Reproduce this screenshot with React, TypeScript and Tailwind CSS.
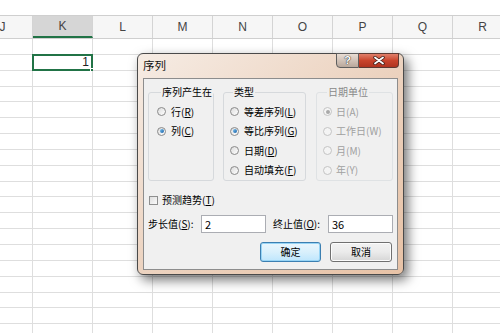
import React from 'react'

const cols = ['J', 'K', 'L', 'M', 'N', 'O', 'P', 'Q', 'R']
const rows = Array.from({ length: 19 }, (_, i) => i)

const Radio = ({ checked = false, disabled = false }: { checked?: boolean; disabled?: boolean }) => (
    <span
        className={
            'flex items-center justify-center w-[9px] h-[9px] rounded-full border ' +
            (disabled
                ? 'border-[#c4c4c4] bg-[#f4f4f4]'
                : 'border-[#8a8a8a] bg-gradient-to-br from-[#dcdcdc] to-[#ffffff]')
        }
    >
        {checked && (
            <span
                className={
                    'w-[4px] h-[4px] rounded-full ' +
                    (disabled ? 'bg-[#a8a8a8]' : 'bg-gradient-to-br from-[#7cc3ef] to-[#0e5ea6]')
                }
            />
        )}
    </span>
)

const Label = ({ text, k, plain = false }: { text: string; k: string; plain?: boolean }) => (
    <span className="whitespace-nowrap">
        {text}({plain ? k : <span className="underline underline-offset-[1px]">{k}</span>})
    </span>
)

const Option = ({
    text,
    k,
    checked,
    disabled,
    gap,
}: {
    text: string
    k: string
    checked?: boolean
    disabled?: boolean
    gap: string
}) => (
    <div className={'flex items-center h-[19.5px] ' + gap}>
        <Radio checked={checked} disabled={disabled} />
        <span className={disabled ? 'text-[#a0a0a0]' : ''}>
            <Label text={text} k={k} plain={disabled} />
        </span>
    </div>
)

const Sheet = () => (
    <div className="flex flex-col">
        <div className="h-[15px] bg-white" />
        <div className="flex ml-[-27px] h-[24px] border-y border-[#cfcfcf] bg-[#f6f6f6]">
            {cols.map((c) => (
                <div
                    key={c}
                    className={
                        'flex items-center justify-center w-[60px] shrink-0 border-r border-[#d4d4d4] text-[12px] text-[#444] ' +
                        (c === 'K' ? 'bg-[#d6d6d6] border-b-2 border-b-[#217346]' : '')
                    }
                >
                    {c}
                </div>
            ))}
        </div>
        {rows.map((r) => (
            <div key={r} className="flex ml-[-27px] h-[15.85px]">
                {cols.map((c) => (
                    <div
                        key={c}
                        className="relative w-[60px] shrink-0 border-r border-b border-[#dedede] bg-white"
                    >
                        {r === 1 && c === 'K' && (
                            <div className="absolute left-[-1px] top-[-1px] right-[-1px] bottom-[-1px] border-2 border-[#217346] flex items-center justify-end pr-[2px] text-[12px] text-[#222]">
                                1
                                <span className="absolute right-[-4px] bottom-[-4px] w-[5px] h-[5px] bg-[#217346] border border-white" />
                            </div>
                        )}
                    </div>
                ))}
            </div>
        ))}
    </div>
)

const SeriesDialog = () => (
    <div className="absolute left-[137px] top-[53px] w-[267px] h-[222px] flex flex-col rounded-[6px] border border-[#4a4a4a] bg-gradient-to-br from-[#f6ece4] via-[#ecd3c0] to-[#e7c2a6] shadow-[4px_5px_12px_rgba(0,0,0,0.55)]">
        <div className="flex h-[24px] justify-between">
            <div
                className="flex items-center pl-[5px] text-[11.5px] text-[#111]"
                style={{ fontFamily: '"Noto Sans CJK SC", sans-serif' }}
            >
                序列
            </div>
            <div className="flex h-[15px] mr-[4px] mt-[-1px]">
                <div className="flex items-center justify-center w-[23px] border border-[#5e5e5e] rounded-bl-[4px] bg-gradient-to-b from-[#e9ddd4] to-[#b9a89c] text-[11px] font-bold text-white [text-shadow:0_0_1px_#222,0_0_1px_#222]">
                    ?
                </div>
                <div className="flex items-center justify-center w-[40px] border border-l-0 border-[#5e3a33] rounded-br-[4px] bg-gradient-to-b from-[#e07f6a] via-[#c9442c] to-[#b03420]">
                    <svg width="12" height="9" viewBox="0 0 12 9">
                        <path d="M2 1.5 L10 7.5 M10 1.5 L2 7.5" stroke="#3a1d18" strokeWidth="3.4" strokeLinecap="round" />
                        <path d="M2 1.5 L10 7.5 M10 1.5 L2 7.5" stroke="#ffffff" strokeWidth="1.8" strokeLinecap="round" />
                    </svg>
                </div>
            </div>
        </div>
        <div
            className="flex-1 mx-[5px] mb-[4px] border border-[#8d8d8d] bg-[#f0f0f0] px-[4px] pt-[6px] flex flex-col text-[10px] text-[#000] leading-[14px]"
            style={{ fontFamily: '"Noto Sans CJK SC", "Liberation Sans", sans-serif' }}
        >
            <div className="flex">
                <fieldset className="w-[65px] h-[96px] border border-[#d6d9dc] rounded-[3px] pl-[8px]">
                    <legend className="ml-[4px] px-[1px] whitespace-nowrap">序列产生在</legend>
                    <div className="pt-[3px]">
                        <Option text="行" k="R" gap="gap-[5px]" />
                        <Option text="列" k="C" checked gap="gap-[5px]" />
                    </div>
                </fieldset>
                <fieldset className="ml-[9px] w-[83px] h-[96px] border border-[#d6d9dc] rounded-[3px] pl-[6px]">
                    <legend className="ml-[3px] px-[1px] whitespace-nowrap">类型</legend>
                    <div className="pt-[3px]">
                        <Option text="等差序列" k="L" gap="gap-[5px]" />
                        <Option text="等比序列" k="G" checked gap="gap-[5px]" />
                        <Option text="日期" k="D" gap="gap-[5px]" />
                        <Option text="自动填充" k="F" gap="gap-[5px]" />
                    </div>
                </fieldset>
                <fieldset className="ml-[10px] w-[77px] h-[96px] border border-[#dfe2e4] rounded-[3px] pl-[6px]">
                    <legend className="ml-[4px] px-[1px] whitespace-nowrap text-[#8a8a8a]">日期单位</legend>
                    <div className="pt-[3px]">
                        <Option text="日" k="A" checked disabled gap="gap-[4px]" />
                        <Option text="工作日" k="W" disabled gap="gap-[4px]" />
                        <Option text="月" k="M" disabled gap="gap-[4px]" />
                        <Option text="年" k="Y" disabled gap="gap-[4px]" />
                    </div>
                </fieldset>
            </div>
            <div className="flex items-center gap-[4px] mt-[12px] h-[14px]">
                <span className="ml-[1px] w-[9px] h-[9px] border border-[#8e8f8f] bg-gradient-to-br from-[#dedede] to-[#fbfbfb]" />
                <Label text="预测趋势" k="T" />
            </div>
            <div className="flex items-center mt-[8px] h-[18px]">
                <span className="w-[53px]">
                    <Label text="步长值" k="S" />:
                </span>
                <div className="flex items-center w-[65px] h-[18px] border border-[#abadb3] bg-white pl-[3px] text-[11px]">
                    2
                </div>
                <span className="ml-[7px] w-[55px]">
                    <Label text="终止值" k="O" />:
                </span>
                <div className="flex items-center w-[65px] h-[18px] border border-[#abadb3] bg-white pl-[3px] text-[11px]">
                    36
                </div>
            </div>
            <div className="flex justify-end gap-[9px] mt-[9px] mr-[1px]">
                <button className="flex items-center justify-center w-[61px] h-[20px] rounded-[3px] border border-[#3c7fb1] bg-gradient-to-b from-[#eaf6fd] via-[#d9f0fc] to-[#bee6fd] shadow-[inset_0_0_0_1px_#97d4f5]">
                    确定
                </button>
                <button className="flex items-center justify-center w-[62px] h-[20px] rounded-[3px] border border-[#707070] bg-gradient-to-b from-[#f2f2f2] via-[#ebebeb] to-[#d6d6d6] shadow-[inset_0_0_0_1px_#fcfcfc]">
                    取消
                </button>
            </div>
        </div>
    </div>
)

export default function App() {
    return (
        <div
            className="relative w-[500px] h-[333px] overflow-hidden bg-white"
            style={{ fontFamily: '"Liberation Sans", Arial, sans-serif' }}
        >
            <Sheet />
            <SeriesDialog />
        </div>
    )
}
